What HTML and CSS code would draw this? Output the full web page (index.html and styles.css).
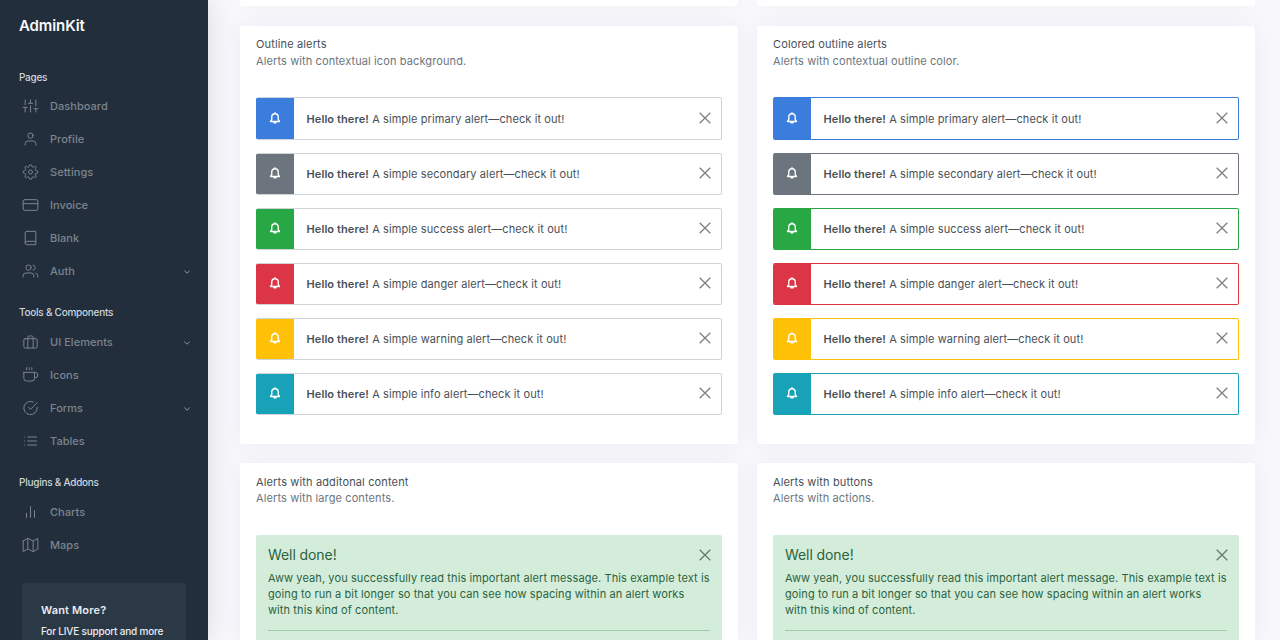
FILE: index.html
```
<!DOCTYPE html>
<html lang="en">
<head>
<meta charset="utf-8">
<title>AdminKit - Alerts</title>
<link rel="stylesheet" href="styles.css">
</head>
<body>
<svg class="sprite" aria-hidden="true">
  <symbol id="sliders" viewBox="0 0 24 24"><path d="M4 21v-7M4 10V3M12 21v-9M12 8V3M20 21v-5M20 12V3M1 14h6M9 8h6M17 16h6"/></symbol>
  <symbol id="user" viewBox="0 0 24 24"><path d="M20 21v-2a4 4 0 0 0-4-4H8a4 4 0 0 0-4 4v2"/><circle cx="12" cy="7" r="4"/></symbol>
  <symbol id="settings" viewBox="0 0 24 24"><circle cx="12" cy="12" r="3"/><path d="M19.4 15a1.65 1.65 0 0 0 .33 1.82l.06.06a2 2 0 0 1 0 2.83 2 2 0 0 1-2.83 0l-.06-.06a1.65 1.65 0 0 0-1.82-.33 1.65 1.65 0 0 0-1 1.51V21a2 2 0 0 1-2 2 2 2 0 0 1-2-2v-.09A1.65 1.65 0 0 0 9 19.4a1.65 1.65 0 0 0-1.82.33l-.06.06a2 2 0 0 1-2.83 0 2 2 0 0 1 0-2.83l.06-.06a1.65 1.65 0 0 0 .33-1.82 1.65 1.65 0 0 0-1.51-1H3a2 2 0 0 1-2-2 2 2 0 0 1 2-2h.09A1.65 1.65 0 0 0 4.6 9a1.65 1.65 0 0 0-.33-1.82l-.06-.06a2 2 0 0 1 0-2.83 2 2 0 0 1 2.83 0l.06.06a1.65 1.65 0 0 0 1.82.33H9a1.65 1.65 0 0 0 1-1.51V3a2 2 0 0 1 2-2 2 2 0 0 1 2 2v.09a1.65 1.65 0 0 0 1 1.51 1.65 1.65 0 0 0 1.82-.33l.06-.06a2 2 0 0 1 2.83 0 2 2 0 0 1 0 2.83l-.06.06a1.65 1.65 0 0 0-.33 1.82V9a1.65 1.65 0 0 0 1.51 1H21a2 2 0 0 1 2 2 2 2 0 0 1-2 2h-.09a1.65 1.65 0 0 0-1.51 1z"/></symbol>
  <symbol id="card" viewBox="0 0 24 24"><rect x="1" y="4" width="22" height="16" rx="2"/><path d="M1 10h22"/></symbol>
  <symbol id="book" viewBox="0 0 24 24"><path d="M4 19.5A2.5 2.5 0 0 1 6.500 17H20"/><path d="M6.500 2H20v20H6.500A2.500 2.500 0 0 1 4 19.500v-15A2.500 2.500 0 0 1 6.500 2z"/></symbol>
  <symbol id="users" viewBox="0 0 24 24"><path d="M17 21v-2a4 4 0 0 0-4-4H5a4 4 0 0 0-4 4v2"/><circle cx="9" cy="7" r="4"/><path d="M23 21v-2a4 4 0 0 0-3-3.870M16 3.130a4 4 0 0 1 0 7.750"/></symbol>
  <symbol id="briefcase" viewBox="0 0 24 24"><rect x="2" y="7" width="20" height="14" rx="2"/><path d="M16 21V5a2 2 0 0 0-2-2h-4a2 2 0 0 0-2 2v16"/></symbol>
  <symbol id="coffee" viewBox="0 0 24 24"><path d="M18 8h1a4 4 0 0 1 0 8h-1M2 8h16v9a4 4 0 0 1-4 4H6a4 4 0 0 1-4-4V8zM6 1v3M10 1v3M14 1v3"/></symbol>
  <symbol id="check" viewBox="0 0 24 24"><path d="M22 11.080V12a10 10 0 1 1-5.930-9.140"/><path d="M22 4L12 14.010l-3-3"/></symbol>
  <symbol id="list" viewBox="0 0 24 24"><path d="M8 6h13M8 12h13M8 18h13M3 6h.01M3 12h.01M3 18h.01"/></symbol>
  <symbol id="bars" viewBox="0 0 24 24"><path d="M18 20V10M12 20V4M6 20v-6"/></symbol>
  <symbol id="map" viewBox="0 0 24 24"><path d="M1 6v16l7-4 8 4 7-4V2l-7 4-8-4-7 4zM8 2v16M16 6v16"/></symbol>
  <symbol id="chevron" viewBox="0 0 8 8"><path d="M1.300 2.600L4 5.200l2.700-2.600"/></symbol>
  <symbol id="bell" viewBox="0 0 24 24"><path d="M18.500 15.500V10a6.500 6.500 0 0 0-13 0v5.500L3 19h18l-2.500-3.500zM12 3.500V1.500M10 21.500h4"/></symbol>
  <symbol id="close" viewBox="0 0 12 12"><path d="M.7.7l10.600 10.600M11.300.7L.7 11.300"/></symbol>
</svg>
<div class="wrapper">
  <nav class="sidebar">
    <a class="brand">AdminKit</a>
    <h6 class="nav-header">Pages</h6>
    <ul class="nav">
      <li class="nav-link"><svg class="icon"><use href="#sliders"/></svg><span>Dashboard</span></li>
      <li class="nav-link"><svg class="icon"><use href="#user"/></svg><span>Profile</span></li>
      <li class="nav-link"><svg class="icon"><use href="#settings"/></svg><span>Settings</span></li>
      <li class="nav-link"><svg class="icon"><use href="#card"/></svg><span>Invoice</span></li>
      <li class="nav-link"><svg class="icon"><use href="#book"/></svg><span>Blank</span></li>
      <li class="nav-link"><svg class="icon"><use href="#users"/></svg><span>Auth</span><svg class="chevron"><use href="#chevron"/></svg></li>
    </ul>
    <h6 class="nav-header">Tools &amp; Components</h6>
    <ul class="nav">
      <li class="nav-link"><svg class="icon"><use href="#briefcase"/></svg><span>UI Elements</span><svg class="chevron"><use href="#chevron"/></svg></li>
      <li class="nav-link"><svg class="icon"><use href="#coffee"/></svg><span>Icons</span></li>
      <li class="nav-link"><svg class="icon"><use href="#check"/></svg><span>Forms</span><svg class="chevron"><use href="#chevron"/></svg></li>
      <li class="nav-link"><svg class="icon"><use href="#list"/></svg><span>Tables</span></li>
    </ul>
    <h6 class="nav-header">Plugins &amp; Addons</h6>
    <ul class="nav">
      <li class="nav-link"><svg class="icon"><use href="#bars"/></svg><span>Charts</span></li>
      <li class="nav-link"><svg class="icon"><use href="#map"/></svg><span>Maps</span></li>
    </ul>
    <div class="cta">
      <strong class="cta-title">Want More?</strong>
      <div class="cta-text">For LIVE support and more</div>
    </div>
  </nav>
  <main class="content">
    <section class="card card-stub"></section>
    <section class="card card-stub"></section>
    <section class="card">
      <h5 class="card-title">Outline alerts</h5>
      <h6 class="card-subtitle">Alerts with contextual icon background.</h6>
      <div class="alerts">
        <div class="alert primary"><div class="alert-icon"><svg class="bell"><use href="#bell"/></svg></div><div class="alert-message"><strong>Hello there!</strong> A simple primary alert—check it out!</div><svg class="close"><use href="#close"/></svg></div>
        <div class="alert secondary"><div class="alert-icon"><svg class="bell"><use href="#bell"/></svg></div><div class="alert-message"><strong>Hello there!</strong> A simple secondary alert—check it out!</div><svg class="close"><use href="#close"/></svg></div>
        <div class="alert success"><div class="alert-icon"><svg class="bell"><use href="#bell"/></svg></div><div class="alert-message"><strong>Hello there!</strong> A simple success alert—check it out!</div><svg class="close"><use href="#close"/></svg></div>
        <div class="alert danger"><div class="alert-icon"><svg class="bell"><use href="#bell"/></svg></div><div class="alert-message"><strong>Hello there!</strong> A simple danger alert—check it out!</div><svg class="close"><use href="#close"/></svg></div>
        <div class="alert warning"><div class="alert-icon"><svg class="bell"><use href="#bell"/></svg></div><div class="alert-message"><strong>Hello there!</strong> A simple warning alert—check it out!</div><svg class="close"><use href="#close"/></svg></div>
        <div class="alert info"><div class="alert-icon"><svg class="bell"><use href="#bell"/></svg></div><div class="alert-message"><strong>Hello there!</strong> A simple info alert—check it out!</div><svg class="close"><use href="#close"/></svg></div>
      </div>
    </section>
    <section class="card">
      <h5 class="card-title">Colored outline alerts</h5>
      <h6 class="card-subtitle">Alerts with contextual outline color.</h6>
      <div class="alerts colored">
        <div class="alert primary"><div class="alert-icon"><svg class="bell"><use href="#bell"/></svg></div><div class="alert-message"><strong>Hello there!</strong> A simple primary alert—check it out!</div><svg class="close"><use href="#close"/></svg></div>
        <div class="alert secondary"><div class="alert-icon"><svg class="bell"><use href="#bell"/></svg></div><div class="alert-message"><strong>Hello there!</strong> A simple secondary alert—check it out!</div><svg class="close"><use href="#close"/></svg></div>
        <div class="alert success"><div class="alert-icon"><svg class="bell"><use href="#bell"/></svg></div><div class="alert-message"><strong>Hello there!</strong> A simple success alert—check it out!</div><svg class="close"><use href="#close"/></svg></div>
        <div class="alert danger"><div class="alert-icon"><svg class="bell"><use href="#bell"/></svg></div><div class="alert-message"><strong>Hello there!</strong> A simple danger alert—check it out!</div><svg class="close"><use href="#close"/></svg></div>
        <div class="alert warning"><div class="alert-icon"><svg class="bell"><use href="#bell"/></svg></div><div class="alert-message"><strong>Hello there!</strong> A simple warning alert—check it out!</div><svg class="close"><use href="#close"/></svg></div>
        <div class="alert info"><div class="alert-icon"><svg class="bell"><use href="#bell"/></svg></div><div class="alert-message"><strong>Hello there!</strong> A simple info alert—check it out!</div><svg class="close"><use href="#close"/></svg></div>
      </div>
    </section>
    <section class="card card-last">
      <h5 class="card-title">Alerts with additonal content</h5>
      <h6 class="card-subtitle">Alerts with large contents.</h6>
      <div class="notice">
        <div class="notice-head"><h4>Well done!</h4><svg class="close"><use href="#close"/></svg></div>
        <p>Aww yeah, you successfully read this important alert message. This example text is<br>going to run a bit longer so that you can see how spacing within an alert works<br>with this kind of content.</p>
        <hr>
      </div>
    </section>
    <section class="card card-last">
      <h5 class="card-title">Alerts with buttons</h5>
      <h6 class="card-subtitle">Alerts with actions.</h6>
      <div class="notice">
        <div class="notice-head"><h4>Well done!</h4><svg class="close"><use href="#close"/></svg></div>
        <p>Aww yeah, you successfully read this important alert message. This example text is<br>going to run a bit longer so that you can see how spacing within an alert works<br>with this kind of content.</p>
        <hr>
      </div>
    </section>
  </main>
</div>
</body>
</html>
```
FILE: styles.css
```
* { box-sizing: border-box; }
body { margin: 0; height: 640px; overflow: hidden; background: #f7f7fc; color: #495057; font: 400 11px/16px Inter, sans-serif; }
h4, h5, h6, p, ul { margin: 0; padding: 0; font-weight: 400; }
.sprite { display: none; }
.wrapper { display: flex; height: 640px; overflow: hidden; }

.sidebar { display: flex; flex-direction: column; width: 208px; flex: none; background: #222e3c; box-shadow: 0 0 28px rgba(0, 0, 0, .12); }
.brand { display: block; height: 63px; padding: 14px 19px 0; color: #f8f9fa; font-size: 15px; line-height: 23px; font-weight: 600; letter-spacing: -.1px; }
.nav-header { padding: 6px 19px 4px; color: #ced4da; font-size: 10px; line-height: 16px; font-weight: 500; letter-spacing: -.25px; }
.nav { list-style: none; margin-bottom: 11px; }
.nav + .nav-header { padding-bottom: 5px; }
.nav-link { display: flex; align-items: center; height: 33px; padding: 0 17px 0 22px; color: #7c848d; font-size: 11px; font-weight: 500; letter-spacing: .04px; }
.icon { width: 17px; height: 16px; margin-right: 11px; fill: none; stroke: currentColor; stroke-width: 1.5; stroke-linecap: round; stroke-linejoin: round; }
.chevron { width: 8px; height: 8px; margin: 3px 0 0 auto; fill: none; stroke: #8e959d; stroke-width: 1; }
.cta { margin: 11px 22px 0; flex: 1; padding: 19px 19px 0; border-radius: 3px 3px 0 0; background: #2b3947; color: #e9ecef; }
.cta-title { display: block; font-size: 11px; font-weight: 600; line-height: 16px; letter-spacing: .15px; }
.cta-text { margin-top: 5px; font-size: 10px; line-height: 16px; font-weight: 500; white-space: nowrap; letter-spacing: -.2px; }

.content { flex: 1; display: grid; grid-template-columns: 498px 498px; grid-template-rows: 7px 418px 177px; gap: 19px; padding-left: 32px; }
.card { background: #fff; border-radius: 3px; box-shadow: 0 0 22px rgba(18, 38, 63, .05); padding: 10px 16px 0; }
.card-stub { height: 6px; padding: 0; border-radius: 0 0 3px 3px; }
.card-last { padding-top: 11px; border-radius: 3px 3px 0 0; }
.card-title { color: #495057; font-size: 11px; line-height: 17px; letter-spacing: .14px; }
.card-subtitle { color: #6c757d; font-size: 11px; line-height: 16px; letter-spacing: .11px; }
.card-last .card-title { line-height: 16px; }
.alerts { display: grid; grid-auto-rows: 42.1px; row-gap: 13px; padding-top: 28.45px; }
.alert { --tone: #3b7ddd; display: flex; align-items: center; border: 1px solid #ced4da; border-left: 0; border-radius: 2px; overflow: hidden; padding-right: 10.5px; }
.colored .alert { border-color: var(--tone); }
.alert-icon { width: 38px; flex: none; align-self: stretch; margin: -1px 0; padding-bottom: 1px; display: flex; align-items: center; justify-content: center; background: var(--tone); color: #fff; }
.secondary { --tone: #6c757d; }
.success { --tone: #28a745; }
.danger { --tone: #dc3545; }
.warning { --tone: #ffc107; }
.info { --tone: #17a2b8; }
.bell { width: 12px; height: 12px; fill: none; stroke: #fff; stroke-width: 2.7; stroke-linejoin: round; stroke-linecap: round; }
.alert-message { flex: 1; padding-left: 12.5px; padding-top: 1px; letter-spacing: .1px; }
.alert-message strong { font-weight: 600; }
.close { width: 12px; height: 12px; margin-bottom: 1px; fill: none; stroke: #7f7f7f; stroke-width: 1.3; }
.notice { margin-top: 29px; height: 105px; padding: 9px 12px 0; border-radius: 2px 2px 0 0; background: #d4edda; color: #2b6340; }
.notice-head { display: flex; justify-content: space-between; align-items: center; height: 22px; margin-right: -.5px; }
.notice-head h4 { font-size: 14px; line-height: 20px; letter-spacing: -.08px; }
.notice-head .close { margin: 0; stroke: #6a776d; }
.notice p { padding-top: 4px; white-space: nowrap; letter-spacing: .1px; }
.notice hr { margin: 12px 0 0; border: 0; height: 1px; background: #a3c9ad; }
```
